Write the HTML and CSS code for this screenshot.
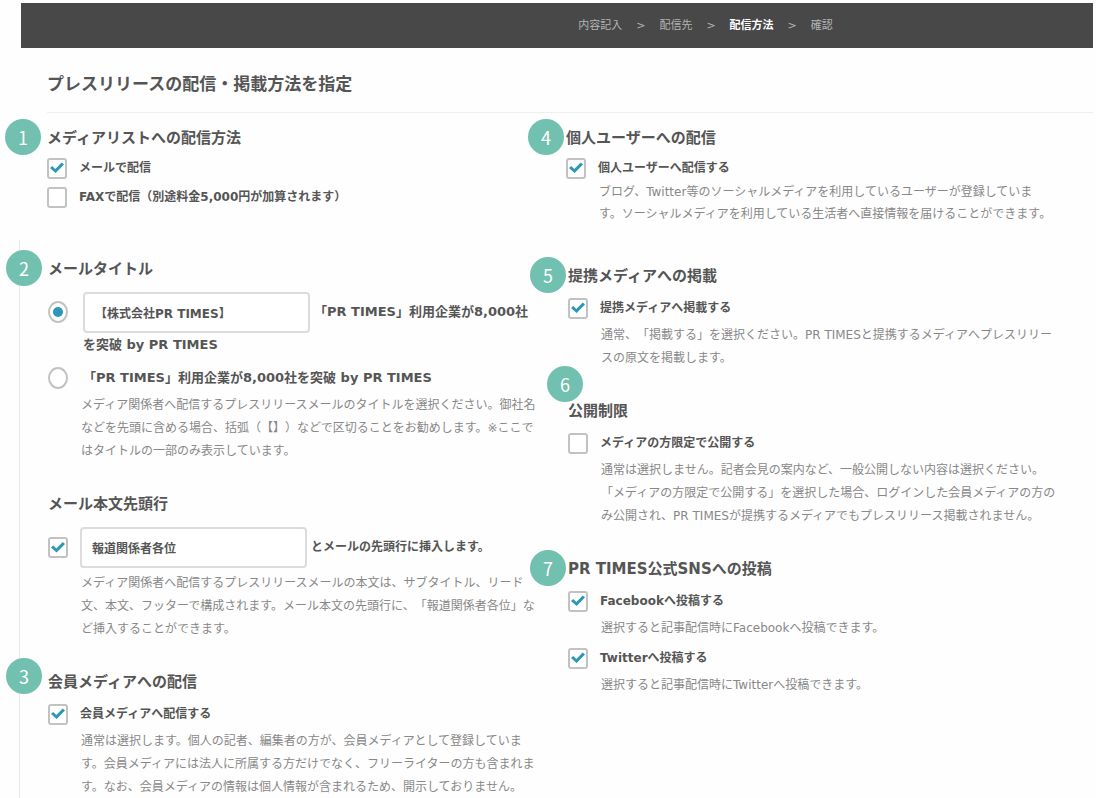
FILE: index.html
```html
<!DOCTYPE html>
<html lang="ja">
<head>
<meta charset="utf-8">
<title>プレスリリースの配信・掲載方法を指定</title>
<link rel="stylesheet" href="styles.css">
</head>
<body>
<header class="topbar">
  <nav class="steps" aria-label="手順">
    <span>内容記入</span><span>&gt;</span><span>配信先</span><span>&gt;</span><span class="current" aria-current="step">配信方法</span><span>&gt;</span><span>確認</span>
  </nav>
</header>
<main class="page">
  <h1 class="page-title">プレスリリースの配信・掲載方法を指定</h1>
  <form class="columns">
    <div class="column">
      <section class="section">
        <h2 class="heading"><span class="badge">1</span>メディアリストへの配信方法</h2>
        <div class="options">
          <label class="option"><input class="check" type="checkbox" checked><span>メールで配信</span></label>
          <label class="option"><input class="check" type="checkbox"><span>FAXで配信（別途料金5,000円が加算されます）</span></label>
        </div>
      </section>
      <div class="more more-left">
        <section class="section">
          <h2 class="heading"><span class="badge">2</span>メールタイトル</h2>
          <div class="titles">
            <div class="title-option">
              <input class="radio radio-tall" type="radio" name="title" id="title-prefix" checked aria-label="先頭に社名を含める">
              <div class="title-text"><input class="field" type="text" value="【株式会社PR TIMES】" aria-label="タイトルの先頭"><label for="title-prefix">「PR TIMES」利用企業が8,000社を突破 by PR TIMES</label></div>
            </div>
            <div class="title-option">
              <input class="radio" type="radio" name="title" id="title-plain">
              <label class="title-text" for="title-plain">「PR TIMES」利用企業が8,000社を突破 by PR TIMES</label>
            </div>
          </div>
          <p class="note">メディア関係者へ配信するプレスリリースメールのタイトルを選択ください。御社名などを先頭に含める場合、括弧（【】）などで区切ることをお勧めします。※ここではタイトルの一部のみ表示しています。</p>
        </section>
        <section class="section">
          <h2 class="heading">メール本文先頭行</h2>
          <div class="option lead-line">
            <input class="check" type="checkbox" id="lead" checked>
            <div><input class="field" type="text" value="報道関係者各位" aria-label="先頭行の文章"><label for="lead">とメールの先頭行に挿入します。</label></div>
          </div>
          <p class="note">メディア関係者へ配信するプレスリリースメールの本文は、サブタイトル、リード文、本文、フッターで構成されます。メール本文の先頭行に、「報道関係者各位」など挿入することができます。</p>
        </section>
        <section class="section">
          <h2 class="heading"><span class="badge badge-raised">3</span>会員メディアへの配信</h2>
          <label class="option"><input class="check" type="checkbox" checked><span>会員メディアへ配信する</span></label>
          <p class="note">通常は選択します。個人の記者、編集者の方が、会員メディアとして登録しています。会員メディアには法人に所属する方だけでなく、フリーライターの方も含まれます。なお、会員メディアの情報は個人情報が含まれるため、開示しておりません。</p>
        </section>
      </div>
    </div>
    <div class="column">
      <section class="section">
        <h2 class="heading"><span class="badge badge-near">4</span>個人ユーザーへの配信</h2>
        <label class="option"><input class="check" type="checkbox" checked><span>個人ユーザーへ配信する</span></label>
        <p class="note note-tight">ブログ、Twitter等のソーシャルメディアを利用しているユーザーが登録していま<br>す。ソーシャルメディアを利用している生活者へ直接情報を届けることができます。</p>
      </section>
      <div class="more more-right">
        <section class="section">
          <h2 class="heading"><span class="badge badge-near">5</span>提携メディアへの掲載</h2>
          <label class="option"><input class="check" type="checkbox" checked><span>提携メディアへ掲載する</span></label>
          <p class="note">通常、「掲載する」を選択ください。PR TIMESと提携するメディアへプレスリリースの原文を掲載します。</p>
        </section>
        <section class="section">
          <h2 class="heading"><span class="badge badge-above">6</span>公開制限</h2>
          <label class="option"><input class="check" type="checkbox"><span>メディアの方限定で公開する</span></label>
          <p class="note">通常は選択しません。記者会見の案内など、一般公開しない内容は選択ください。「メディアの方限定で公開する」を選択した場合、ログインした会員メディアの方のみ公開され、PR TIMESが提携するメディアでもプレスリリース掲載されません。</p>
        </section>
        <section class="section">
          <h2 class="heading"><span class="badge badge-near">7</span>PR TIMES公式SNSへの投稿</h2>
          <label class="option"><input class="check" type="checkbox" checked><span>Facebookへ投稿する</span></label>
          <p class="note">選択すると記事配信時にFacebookへ投稿できます。</p>
          <label class="option option-next"><input class="check" type="checkbox" checked><span>Twitterへ投稿する</span></label>
          <p class="note">選択すると記事配信時にTwitterへ投稿できます。</p>
        </section>
      </div>
    </div>
  </form>
</main>
</body>
</html>
```

FILE: styles.css
```css
* { box-sizing: border-box; }

body {
  margin: 0;
  padding: 3px 3px 0 0;
  background: #fefefe;
  color: #555;
  font: 12px/24px "DejaVu Sans", "Noto Sans CJK JP", sans-serif;
  text-spacing-trim: space-all;
  overflow: hidden;
}

.topbar {
  margin-left: 21px;
  padding: 12px 20px 11px;
  background: #484848;
}

.steps {
  display: flex;
  justify-content: center;
  gap: 14px;
  padding-left: 297px;
  color: #b4b4b4;
  font-size: 11px;
  line-height: 22px;
}

.current { color: #fff; font-weight: bold; }

.page { padding-left: 47px; }

.page-title {
  margin: 0;
  padding: 24px 0 16px;
  border-bottom: 1px solid #eee;
  font-size: 17px;
  line-height: 24px;
  font-weight: bold;
}

.columns {
  display: grid;
  grid-template-columns: 1fr 1fr;
  gap: 24px;
  padding: 13px 32px 0 0;
}

.section + .section { margin-top: 29px; }

.heading {
  position: relative;
  margin: 0 0 9px;
  padding-top: 1px;
  font-size: 15px;
  line-height: 22px;
  font-weight: bold;
}

.column > .section .heading { margin-bottom: 7px; }

.badge {
  position: absolute;
  left: -42px;
  top: -7px;
  width: 36px;
  height: 36px;
  border-radius: 50%;
  background: #72c0b0;
  color: #fff;
  font: 400 18px/36px "Noto Sans CJK JP", sans-serif;
  text-align: center;
}

.badge-near { left: -38px; }
.badge-raised { top: -12px; }
.badge-above { left: -21px; top: -33px; }

.options { display: grid; gap: 5px; }

.option {
  display: flex;
  align-items: center;
  gap: 12px;
  font-weight: bold;
}

.option-next { margin-top: 6px; }

.more-left {
  margin: 31px 0 0 -28px;
  padding: 17px 0 0 28px;
  border-left: 1px solid #e8e8e8;
}

.more-right { margin-top: 39px; padding-left: 2px; }

.check,
.radio {
  appearance: none;
  flex: none;
  display: grid;
  place-items: center;
  width: 20px;
  height: 21px;
  margin: 0;
  border: 2px solid #c2c2c2;
  border-radius: 3px;
  background: #fff;
}

.check:checked::before {
  content: "";
  width: 14px;
  height: 12px;
  background: #2b98b8;
  clip-path: polygon(0 50%, 16% 34%, 38% 58%, 84% 4%, 100% 20%, 40% 92%);
}

.radio { height: 22px; margin-top: 1px; border-radius: 50%; }

.radio:checked::before {
  content: "";
  width: 10px;
  height: 10px;
  border-radius: 50%;
  background: #2b98b8;
}

.titles { display: grid; gap: 9px; padding-top: 3px; }

.title-option {
  display: flex;
  gap: 15px;
  padding-right: 8px;
  font-size: 13px;
  font-weight: bold;
}

.radio-tall { margin-top: 9px; }

.field {
  width: 227px;
  height: 41px;
  margin: 0 4px 0 0;
  padding: 0 10px;
  border: 2px solid #dcdcdc;
  border-radius: 4px;
  background: #fff;
  color: #555;
  font: bold 12px/24px "DejaVu Sans", "Noto Sans CJK JP", sans-serif;
  vertical-align: middle;
}

.lead-line { padding-top: 3px; }

.note {
  margin: 4px 3px 0 0;
  padding-left: 33px;
  color: #888;
  line-height: 23px;
}

.note-tight { margin-top: 1px; line-height: 22px; }
```
